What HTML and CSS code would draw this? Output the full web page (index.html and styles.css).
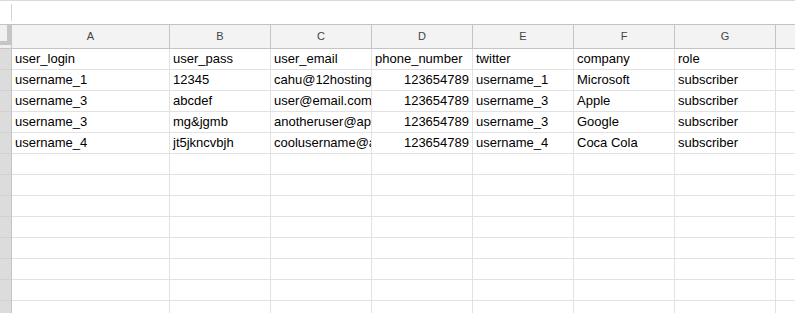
FILE: index.html
```html
<!DOCTYPE html>
<html lang="en">
<head>
    <meta charset="UTF-8">
    <meta name="viewport" content="width=device-width, initial-scale=1.0">
    <title>users - Sheet1</title>
    <link rel="stylesheet" href="styles.css">
</head>
<body>
    <div class="formula-bar">
        <span class="fx-divider"></span>
    </div>

    <div class="sheet">
        <div class="row head-row">
            <div class="cell corner"><span class="freeze"></span></div>
            <div class="cell col-head">A</div>
            <div class="cell col-head">B</div>
            <div class="cell col-head">C</div>
            <div class="cell col-head">D</div>
            <div class="cell col-head">E</div>
            <div class="cell col-head">F</div>
            <div class="cell col-head">G</div>
            <div class="cell col-head last"></div>
        </div>
        <div id="rows"></div>
    </div>

    <script>
        // exported user list, first line is the header row
        let data = [
            ["user_login", "user_pass", "user_email", "phone_number", "twitter", "company", "role"],
            ["username_1", "12345", "cahu@12hosting.net", "123654789", "username_1", "Microsoft", "subscriber"],
            ["username_3", "abcdef", "user@email.com", "123654789", "username_3", "Apple", "subscriber"],
            ["username_3", "mg&jgmb", "anotheruser@apple.com", "123654789", "username_3", "Google", "subscriber"],
            ["username_4", "jt5jkncvbjh", "coolusername@aol.com", "123654789", "username_4", "Coca Cola", "subscriber"]
        ];
        let totalRows = 13;
        let phoneCol = 3; // the only column stored as numbers
        let rows = document.getElementById("rows");

        for (let r = 0; r < totalRows; r++) {
            let row = document.createElement("div");
            row.className = "row";

            let num = document.createElement("div");
            num.className = "cell row-head";
            row.appendChild(num);

            for (let c = 0; c < 7; c++) {
                let cell = document.createElement("div");
                cell.className = "cell";
                let value = data[r] ? data[r][c] : "";
                if (r > 0 && c == phoneCol) {
                    cell.classList.add("num");
                }
                cell.textContent = value;
                row.appendChild(cell);
            }

            let extra = document.createElement("div");
            extra.className = "cell last";
            row.appendChild(extra);

            rows.appendChild(row);
        }
    </script>
</body>
</html>
```

FILE: styles.css
```css
html, body {
    margin: 0;
    height: 100%;
    overflow: hidden;
    background: #ffffff;
}
body {
    font-family: "Liberation Sans", Arial, sans-serif;
    font-size: 13px;
    color: #000;
}
.formula-bar {
    height: 25px;
    box-sizing: border-box;
    border-top: 1px solid #dadada;
    border-bottom: 1px solid #c4c4c4;
    position: relative;
}
.fx-divider {
    position: absolute;
    left: 11px;
    top: 3px;
    width: 1px;
    height: 17px;
    background: #d4d4d4;
}
.row {
    display: grid;
    grid-template-columns: 12px 158px 101px 101px 101px 101px 101px 101px 1fr;
    height: 21px;
}
.cell {
    box-sizing: border-box;
    border-right: 1px solid #e2e2e2;
    border-bottom: 1px solid #e2e2e2;
    padding: 0 3px;
    line-height: 20px;
    white-space: nowrap;
    overflow: hidden;
}
.cell.num {
    text-align: right;
}
.cell.last {
    border-right: none;
}
.row-head {
    background: #dcdcdc;
    border-right-color: #c4c4c4;
    border-bottom-color: #d0d0d0;
    padding: 0;
}
.head-row {
    height: 24px;
}
.col-head {
    background: #f3f3f3;
    border-right-color: #c4c4c4;
    border-bottom-color: #c4c4c4;
    text-align: center;
    font-size: 11px;
    line-height: 23px;
    color: #444;
}
.corner {
    background: #f0f0f0;
    border-right-color: #c4c4c4;
    border-bottom-color: #c4c4c4;
    padding: 0;
}
/* frozen pane handles in the corner */
.freeze {
    display: block;
    width: 11px;
    height: 20px;
    box-shadow: inset -4px -4px 0 #c6c6c6;
}
```
